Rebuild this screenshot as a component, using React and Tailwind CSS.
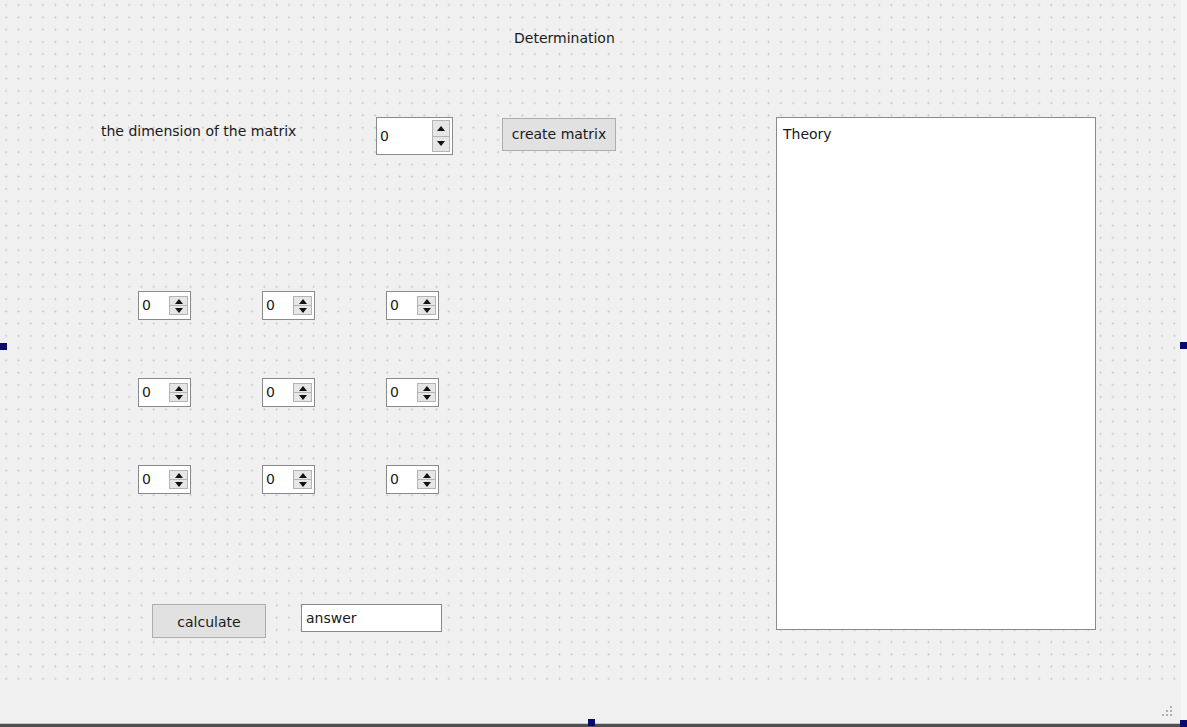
import React from 'react';

const font = "font-['DejaVu_Sans',sans-serif]";

function Arrow({ down }) {
    return (
        <svg width="8" height="5" viewBox="0 0 8 5" className="block">
            {down ? <polygon points="0,0 8,0 4,5" fill="#111" /> : <polygon points="0,5 8,5 4,0" fill="#111" />}
        </svg>
    );
}

function SpinBox({ big }) {
    if (big) {
        return (
            <div className="w-[77px] h-[38px] bg-white border border-[#8a8a8a] flex items-stretch">
                <div className="flex-1 flex items-center pl-[3px] text-[14px] text-[#1a1a1a]">0</div>
                <div className="w-[18px] my-[2px] mr-[2px] flex flex-col border border-[#b4b4b4] bg-[#e6e6e6]">
                    <div className="flex-1 flex items-center justify-center border-b border-[#b4b4b4]"><Arrow /></div>
                    <div className="flex-1 flex items-center justify-center"><Arrow down /></div>
                </div>
            </div>
        );
    }
    return (
        <div className="w-[53px] h-[29px] bg-white border border-[#8a8a8a] flex items-stretch">
            <div className="flex-1 flex items-center pl-[3px] text-[14px] text-[#1a1a1a]">0</div>
            <div className="w-[19px] my-[4px] mr-[2px] flex flex-col border border-[#b4b4b4] bg-[#e6e6e6]">
                <div className="flex-1 flex items-center justify-center border-b border-[#b4b4b4]"><Arrow /></div>
                <div className="flex-1 flex items-center justify-center"><Arrow down /></div>
            </div>
        </div>
    );
}

function Handle({ className }) {
    return <div className={"absolute w-[7px] h-[7px] bg-[#0a0a6e] " + className} />;
}

export default function App() {
    const rows = [0, 1, 2];
    return (
        <div className={"relative w-[1187px] h-[727px] overflow-hidden bg-[#f0f0f0] text-[#1a1a1a] " + font}>
            <div className="h-[723px] border-r-[6px] border-[#f6f6f6] flex flex-col">
                <div className="h-[690px] bg-[radial-gradient(circle,#c8c8c8_0.8px,transparent_1.2px)] bg-size-[12.3px_12.25px] bg-position-[0px_-1px]">
                    <div className="pt-[29px] pl-[514px] text-[14px] leading-[18px]">Determination</div>
                    <div className="flex items-start mt-[70px]">
                        <div className="w-[776px] flex flex-col">
                            <div className="flex items-start h-[38px]">
                                <div className="ml-[101px] mt-[5px] text-[14px] leading-[18px] w-[275px]">the dimension of the matrix</div>
                                <SpinBox big />
                                <button className="ml-[49px] mt-[1px] w-[114px] h-[33px] bg-[#e1e1e1] border border-[#adadad] text-[14px] text-[#1a1a1a]">create matrix</button>
                            </div>
                            <div className="mt-[136px] ml-[138px] grid grid-cols-[53px_53px_53px] gap-x-[71px] gap-y-[58px]">
                                {rows.map(r => rows.map(c => <SpinBox key={r + '-' + c} />))}
                            </div>
                            <div className="flex items-start mt-[110px]">
                                <button className="ml-[152px] w-[114px] h-[34px] bg-[#e1e1e1] border border-[#adadad] text-[14px] text-[#1a1a1a] pt-[2px]">calculate</button>
                                <div className="ml-[35px] w-[141px] h-[28px] bg-white border border-[#8a8a8a] flex items-center pl-[4px] text-[14px]">answer</div>
                            </div>
                        </div>
                        <div className="w-[320px] h-[513px] bg-white border border-[#8a8a8a] px-[6px] pt-[7px] text-[14px] leading-[18px]">Theory</div>
                    </div>
                </div>
                <div className="flex-1 flex justify-end items-end pr-[8px] pb-[6px]">
                    <svg width="12" height="12" viewBox="0 0 12 12">
                        {[[10, 2], [10, 6], [10, 10], [6, 6], [6, 10], [2, 10]].map(([x, y], i) => (
                            <rect key={i} x={x - 1} y={y - 1} width="2" height="2" fill="#b0b0b0" />
                        ))}
                    </svg>
                </div>
            </div>
            <div className="h-[4px] bg-[#505050] border-t border-[#c8c8c8]" />
            <Handle className="left-0 top-[343px] w-[4px]" />
            <Handle className="right-0 top-[342px]" />
            <Handle className="left-[588px] bottom-[1px]" />
            <Handle className="right-0 bottom-0" />
        </div>
    );
}
